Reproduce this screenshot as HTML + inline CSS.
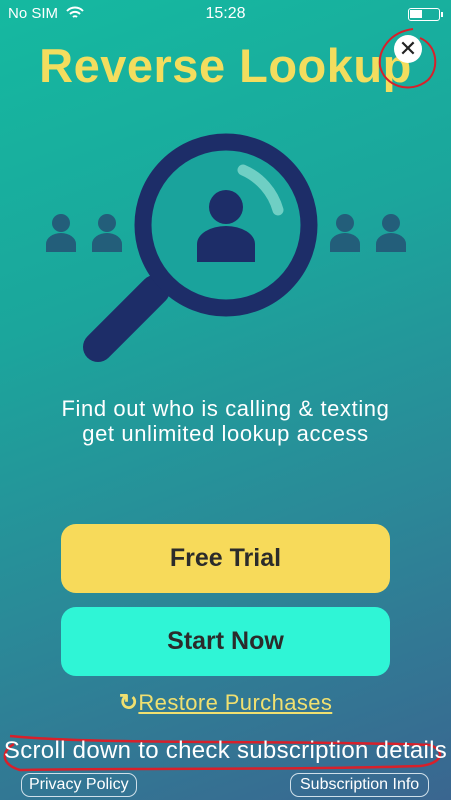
<!DOCTYPE html>
<html><head><meta charset="utf-8"><style>
*{margin:0;padding:0;box-sizing:border-box}
body{width:451px;height:800px;overflow:hidden;position:relative;font-family:"Liberation Sans",sans-serif;
background:linear-gradient(160deg,#15b9a0 0%,#1ba69c 35%,#2a8a98 65%,#3a6690 100%);}
.abs{position:absolute}
.status{top:5px;font-size:15px;color:#fff}
.title{top:38px;left:0;width:451px;text-align:center;color:#f3dd5e;font-weight:bold;font-size:47px;letter-spacing:0.5px}
.sub{top:396px;left:0;width:451px;text-align:center;color:#fff;font-size:22px;line-height:25px;letter-spacing:0.6px}
.btn{left:61px;width:329px;height:69px;border-radius:15px;text-align:center;line-height:69px;font-weight:bold;font-size:25px;color:#2b2b2b}
.restore{top:689px;left:0;width:451px;text-align:center;color:#f0e070;font-size:22px;letter-spacing:0.4px}
.restore span{text-decoration:underline}
.scroll{top:737px;left:0;width:451px;text-align:center;color:#fff;font-size:24px;white-space:nowrap;letter-spacing:0.3px}
.pill{top:773px;height:24px;border:1.5px solid #cfe0ea;border-radius:9px;color:#fff;font-size:16px;line-height:21px;padding:0 7px}
</style></head><body>
<div class="abs status" style="left:8px">No SIM
<svg width="18" height="13" viewBox="0 0 18 13" style="vertical-align:-1px;margin-left:4px"><path d="M1 5a11 11 0 0 1 16 0M4 8a7 7 0 0 1 10 0M7 11a3 3 0 0 1 4 0" stroke="#fff" stroke-width="2" fill="none"/></svg></div>
<div class="abs status" style="left:0;width:451px;text-align:center;font-size:16px">15:28</div>
<div class="abs" style="left:408px;top:8px;width:32px;height:13px;border:1.5px solid #fff;border-radius:3px"><div style="width:12px;height:8px;background:#fff;margin:1px"></div></div>
<div class="abs" style="left:441px;top:12px;width:2px;height:5px;background:#fff"></div>
<div class="abs title">Reverse Lookup</div>
<div class="abs" style="left:394px;top:35px;width:28px;height:28px;border-radius:50%;background:#fff;text-align:center;line-height:28px;font-size:22px;color:#222">✕</div>
<svg class="abs" style="left:0;top:0" width="451" height="800">
<path d="M413 29C390 32 378 50 380 66C384 86 410 95 428 80C440 68 437 45 420 38" stroke="#d8202a" stroke-width="2" fill="none"/>
<path d="M10 736C100 745 300 740 430 745C448 752 440 764 420 766C300 770 120 768 20 770C2 765 0 752 14 744" stroke="#d8202a" stroke-width="2.5" fill="none"/>
<g fill="#235e7a">
<circle cx="61" cy="223" r="9"/><path d="M46 252v-8a15 11 0 0 1 30 0v8z"/>
<circle cx="107" cy="223" r="9"/><path d="M92 252v-8a15 11 0 0 1 30 0v8z"/>
<circle cx="345" cy="223" r="9"/><path d="M330 252v-8a15 11 0 0 1 30 0v8z"/>
<circle cx="391" cy="223" r="9"/><path d="M376 252v-8a15 11 0 0 1 30 0v8z"/>
</g>
<line x1="155" y1="290" x2="98" y2="347" stroke="#1d2d68" stroke-width="30" stroke-linecap="round"/>
<circle cx="226" cy="225" r="83" fill="#1aa39c" stroke="#1d2d68" stroke-width="17"/>
<path d="M243 170A62 62 0 0 1 278 210" stroke="#6fcfc4" stroke-width="11" fill="none" stroke-linecap="round"/>
<g fill="#1d2d68"><circle cx="226" cy="207" r="17"/><path d="M197 262v-18a29 18 0 0 1 58 0v18z"/></g>
</svg>
<div class="abs sub">Find out who is calling &amp; texting<br>get unlimited lookup access</div>
<div class="abs btn" style="top:524px;background:#f7da5a">Free Trial</div>
<div class="abs btn" style="top:607px;background:#2ff5d6">Start Now</div>
<div class="abs restore"><b style="color:#f0e070;font-size:23px">↻</b><span>Restore Purchases</span></div>
<div class="abs scroll">Scroll down to check subscription details</div>
<div class="abs pill" style="left:21px">Privacy Policy</div>
<div class="abs pill" style="left:290px;padding:0 9px">Subscription Info</div>
</body></html>
